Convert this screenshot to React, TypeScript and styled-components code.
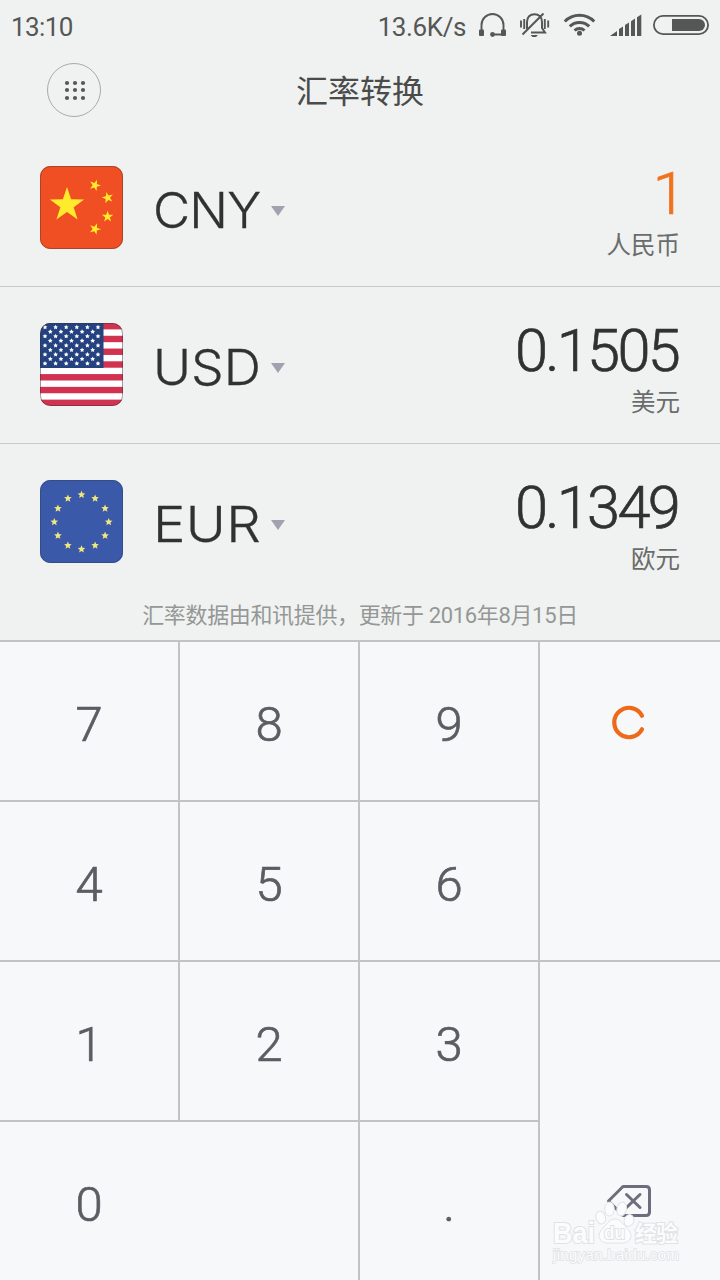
import React from "react";
import styled, { createGlobalStyle } from "styled-components";

const Global = createGlobalStyle`
  * { box-sizing: border-box; }
  body { margin: 0; background: #f0f2f1; font-family: Inter, "Noto Sans CJK SC", sans-serif; }
`;

const Screen = styled.div`
  width: 720px;
  height: 1280px;
  display: flex;
  flex-direction: column;
  background: #f0f2f1;
  overflow: hidden;
  position: relative;
`;

const StatusBar = styled.div`
  height: 50px;
  display: flex;
  align-items: center;
  justify-content: space-between;
  padding: 3px 0 0 11px;
  color: #555756;
  font-family: Roboto, sans-serif;
  font-size: 26px;
  line-height: 50px;
  white-space: nowrap;
`;

const Clock = styled.span`
  letter-spacing: -0.6px;
`;

const StatusRight = styled.div`
  display: flex;
  align-items: center;
`;

const Speed = styled.span`
  margin-right: 4px;
  letter-spacing: -0.4px;
`;

const StatusIcons = styled.svg`
  display: block;
  width: 250px;
  height: 50px;
  margin-top: -3px;
`;

const TitleBar = styled.header`
  height: 80px;
  display: grid;
  grid-template-columns: 148px 1fr 148px;
  align-items: center;
`;

const MenuButton = styled.button`
  width: 54px;
  height: 54px;
  margin-left: 47px;
  padding: 0;
  border: 1px solid #a9abaa;
  border-radius: 50%;
  background: none;
  display: flex;
  align-items: center;
  justify-content: center;
`;

const Title = styled.h1`
  margin: 0 0 2px;
  text-align: center;
  font: 400 32px/48px "Noto Sans CJK SC", sans-serif;
  color: #4a4c4b;
`;

const Row = styled.div<{ $last?: boolean }>`
  height: 157px;
  display: flex;
  align-items: center;
  padding: 0 40px;
  border-bottom: 1px solid ${(p) => (p.$last ? "transparent" : "#c8caca")};
`;

const Flag = styled.svg`
  width: 84px;
  height: 84px;
  flex: none;
  margin-top: -1px;
`;

const Code = styled.span<{ $gap: number; $stretch: number }>`
  width: 118px;
  margin-left: 29px;
  font-size: 49.5px;
  font-weight: 300;
  line-height: 60px;
  letter-spacing: ${(p) => p.$gap}px;
  transform: scaleX(${(p) => p.$stretch});
  transform-origin: left;
  color: #303231;
  -webkit-text-stroke: 0.3px #303231;
  padding-top: 4px;
`;

const Arrow = styled.span`
  width: 14px;
  height: 10px;
  margin-top: 6px;
  background: #a0a2ad;
  clip-path: polygon(0 0, 100% 0, 50% 100%);
`;

const Amount = styled.div`
  flex: 1;
  display: flex;
  flex-direction: column;
  align-items: flex-end;
  padding-top: 9px;
`;

const Value = styled.span<{ $active?: boolean }>`
  margin: -1px ${(p) => (p.$active ? -3 : 2)}px 1px 0;
  font-family: Roboto, sans-serif;
  font-size: 59.5px;
  font-weight: 300;
  line-height: 62px;
  letter-spacing: -2.7px;
  color: ${(p) => (p.$active ? "#f2711f" : "#303231")};
  -webkit-text-stroke: 0.7px currentColor;
`;

const Name = styled.span`
  font: 400 24.5px/36px "Noto Sans CJK SC", sans-serif;
  color: #6a6c6b;
`;

const Source = styled.div`
  margin-top: -1px;
  flex: 1;
  text-align: center;
  font: 400 22px/32px Roboto, "Noto Sans CJK SC", sans-serif;
  letter-spacing: -0.35px;
  color: #959796;
  white-space: nowrap;
`;

const Keypad = styled.div`
  flex: none;
  display: grid;
  grid-template-columns: repeat(4, 180px);
  grid-template-rows: repeat(4, 160px);
`;

const Key = styled.button<{ $cols?: number; $rows?: number; $edge?: boolean; $low?: boolean }>`
  grid-column: span ${(p) => p.$cols ?? 1};
  grid-row: span ${(p) => p.$rows ?? 1};
  margin: 0;
  padding: 0;
  border: 0 solid #c2c3c5;
  border-top-width: 2px;
  border-right-width: ${(p) => (p.$edge ? 0 : 2)}px;
  background: #f6f8fa;
  display: flex;
  align-items: ${(p) => (p.$low ? "flex-end" : "flex-start")};
  justify-content: flex-start;
`;

const Face = styled.span<{ $text?: boolean }>`
  width: 178px;
  height: 158px;
  display: flex;
  align-items: center;
  justify-content: center;
  padding-top: ${(p) => (p.$text ? 7 : 4)}px;
  font: 300 49px/60px Roboto, sans-serif;
  color: #5b5d63;
  -webkit-text-stroke: 0.7px #5b5d63;
`;

const Watermark = styled.div`
  position: absolute;
  left: 552px;
  top: 1200px;
`;

const starPoints = (cx: number, cy: number, r: number, turn = 0, inner = 0.39) =>
  Array.from({ length: 10 }, (_, i) => {
    const a = ((i * 36 - 90 + turn) * Math.PI) / 180;
    const d = i % 2 ? r * inner : r;
    return `${(cx + d * Math.cos(a)).toFixed(2)},${(cy + d * Math.sin(a)).toFixed(2)}`;
  }).join(" ");

const Star = (p: { x: number; y: number; r: number; turn?: number; inner?: number; fill: string }) => (
  <polygon points={starPoints(p.x, p.y, p.r, p.turn, p.inner)} fill={p.fill} />
);

const Frame = ({ color }: { color: string }) => (
  <rect x="0.5" y="0.5" width="82" height="82" rx="10" fill="none" stroke={color} />
);

const ChinaFlag = () => (
  <Flag viewBox="0 0 84 84">
    <rect width="83" height="83" rx="10.5" fill="#f04e23" />
    <Star x={27} y={39} r={18} fill="#ffea2b" />
    <Star x={55} y={19.3} r={6} turn={20} fill="#ffea2b" />
    <Star x={67.7} y={31.7} r={6} turn={-14} fill="#ffea2b" />
    <Star x={67.6} y={50.7} r={6} fill="#ffea2b" />
    <Star x={55} y={63} r={6} turn={20} fill="#ffea2b" />
    <Frame color="#a5452c" />
  </Flag>
);

const UsaFlag = () => (
  <Flag viewBox="0 0 84 84">
    <clipPath id="usa"><rect width="83" height="83" rx="10.5" /></clipPath>
    <g clipPath="url(#usa)">
      <rect width="83" height="83" fill="#fff" />
      {Array.from({ length: 7 }, (_, i) => (
        <rect key={i} y={i * 12.77} width="83" height="6.4" fill="#d0324f" />
      ))}
      <rect width="63.5" height="45" fill="#24427f" />
      {Array.from({ length: 9 }, (_, r) =>
        Array.from({ length: r % 2 ? 5 : 6 }, (_, c) => (
          <Star key={`${r}-${c}`} x={5 + c * 10.6 + (r % 2 ? 5.3 : 0)} y={4.2 + r * 4.55} r={2.5} inner={0.5} fill="#fff" />
        ))
      )}
    </g>
    <Frame color="rgba(60,50,60,.5)" />
  </Flag>
);

const EuroFlag = () => (
  <Flag viewBox="0 0 84 84">
    <rect width="83" height="83" rx="10.5" fill="#3a5aa9" />
    {Array.from({ length: 12 }, (_, i) => {
      const a = (i * Math.PI) / 6;
      return <Star key={i} x={41.5 + 27.2 * Math.sin(a)} y={42 - 27.2 * Math.cos(a)} r={4} inner={0.45} fill="#f3e87a" />;
    })}
    <Frame color="#344c88" />
  </Flag>
);

const currencies = [
  { code: "CNY", gap: -0.8, stretch: 1.03, value: "1", name: "人民币", flag: <ChinaFlag />, active: true },
  { code: "USD", gap: 0, stretch: 1.045, value: "0.1505", name: "美元", flag: <UsaFlag /> },
  { code: "EUR", gap: 0.3, stretch: 1.1, value: "0.1349", name: "欧元", flag: <EuroFlag /> },
];

const Digit = ({ children, cols }: { children: string; cols?: number }) => (
  <Key $cols={cols}><Face $text>{children}</Face></Key>
);

export default function App() {
  return (
    <>
      <Global />
      <Screen>
        <StatusBar>
          <Clock>13:10</Clock>
          <StatusRight>
            <Speed>13.6K/s</Speed>
            <StatusIcons viewBox="470 0 250 50" fill="none" stroke="#555756">
              <path d="M481.500 31V25a11 11 0 0 1 22 0v6M503 34.500H493" strokeWidth="1.9" />
              <g fill="#555756" stroke="none">
                <rect x="479" y="29.500" width="5" height="6.500" rx="1" />
                <rect x="501" y="29.500" width="5" height="6.500" rx="1" />
                <circle cx="492.500" cy="34.500" r="2.400" />
              </g>
              <path d="M527 29V22C527 17 530 14.200 534.500 14.200C539 14.200 542 17 542 22V28L545 32.500H531M522.500 34.500L543.500 13.500" strokeWidth="2" />
              <path d="M521 20.500v7M524.200 19v10M544.800 19v10M548.200 20.500v7" strokeWidth="1.9" />
              <path d="M530.500 35h7.500l-2 2h-3.500z" fill="#555756" stroke="none" />
              <path d="M564.800 21.500a20.500 20.500 0 0 1 29.400 0M569.800 26.300a14 14 0 0 1 19.400 0M574.500 30.500a7.500 7.500 0 0 1 10 0" strokeWidth="3" />
              <circle cx="579.500" cy="33.300" r="2.500" fill="#555756" stroke="none" />
              <path d="M610 36l7-5v5zM619 36v-7l4-2.500v9.500zM625 36V25l4-2.500v13.500zM631 36V21.200l4-2.700v17.500zM637 36V17.200l4.300-2.700v21.500z" fill="#555756" stroke="none" />
              <rect x="653.900" y="15.900" width="54.200" height="18.200" rx="9.100" strokeWidth="1.800" />
              <path d="M672 19h27a6 6 0 0 1 0 12h-27z" fill="#555756" stroke="none" />
            </StatusIcons>
          </StatusRight>
        </StatusBar>
        <TitleBar>
          <MenuButton aria-label="menu">
            <svg width="24" height="24" viewBox="0 0 24 24" fill="#555756">
              {[5, 12, 20].map((y) => [5, 13, 21].map((x) => <circle key={`${x}-${y}`} cx={x} cy={y} r="2.1" />))}
            </svg>
          </MenuButton>
          <Title>汇率转换</Title>
        </TitleBar>
        {currencies.map((c, i) => (
          <Row key={c.code} $last={i === 2}>
            {c.flag}
            <Code $gap={c.gap} $stretch={c.stretch}>{c.code}</Code>
            <Arrow />
            <Amount>
              <Value $active={c.active}>{c.value}</Value>
              <Name>{c.name}</Name>
            </Amount>
          </Row>
        ))}
        <Source>汇率数据由和讯提供，更新于 2016年8月15日</Source>
        <Keypad>
          <Digit>7</Digit>
          <Digit>8</Digit>
          <Digit>9</Digit>
          <Key $rows={2} $edge aria-label="clear">
            <Face>
              <svg width="40" height="40" viewBox="0 0 40 40" fill="none" stroke="#ee6a1a" strokeWidth="4.2" strokeLinecap="round">
                <path d="M33 12.700A14.700 14.700 0 1 0 33 26.300" />
              </svg>
            </Face>
          </Key>
          <Digit>4</Digit>
          <Digit>5</Digit>
          <Digit>6</Digit>
          <Digit>1</Digit>
          <Digit>2</Digit>
          <Digit>3</Digit>
          <Key $rows={2} $edge $low aria-label="delete">
            <Face>
              <svg width="46" height="34" viewBox="606 1186 46 34" overflow="visible" fill="none" stroke="#6c6e7e" strokeWidth="3" strokeLinecap="round" strokeLinejoin="round">
                <path d="M623 1186.500H646q3.500 0 3.500 3.500V1212q0 3.500-3.500 3.500H623L608.500 1201z M626.500 1194.500L640 1207.500M640 1194.500L626.500 1207.500" />
              </svg>
            </Face>
          </Key>
          <Digit cols={2}>0</Digit>
          <Digit>.</Digit>
        </Keypad>
        <Watermark>
          <svg width="130" height="64" viewBox="552 1200 130 64" fill="#fbfcfd" stroke="#e0e2e4" strokeWidth="1">
            <ellipse cx="600.700" cy="1217.500" rx="4.800" ry="6.500" transform="rotate(-15 600.700 1217.500)" />
            <ellipse cx="609.500" cy="1209" rx="4.800" ry="7" />
            <ellipse cx="621.700" cy="1209" rx="4.800" ry="7" transform="rotate(12 621.700 1209)" />
            <ellipse cx="629" cy="1220.500" rx="4.800" ry="6" transform="rotate(20 629 1220.500)" />
            <path d="M615 1219c5 0 7 4 11 8c5 5 6 9 4 12c-3 5-9 4-15 4s-12 1-15-4c-2-3-1-7 4-12c4-4 6-8 11-8z" />
            <g fontFamily="Liberation Sans, sans-serif" fontWeight="700" paintOrder="stroke" strokeWidth="2">
              <text x="553" y="1243" fontSize="29" textLength="42" lengthAdjust="spacingAndGlyphs">Bai</text>
              <text x="604" y="1239" fontSize="19" textLength="21" lengthAdjust="spacingAndGlyphs">du</text>
              <text x="635" y="1241" fontSize="22" textLength="43" fontFamily="Noto Sans CJK SC">经验</text>
              <text x="553" y="1260" fontSize="15" fontWeight="400" textLength="126" strokeWidth="1.500">jingyan.baidu.com</text>
            </g>
          </svg>
        </Watermark>
      </Screen>
    </>
  );
}
